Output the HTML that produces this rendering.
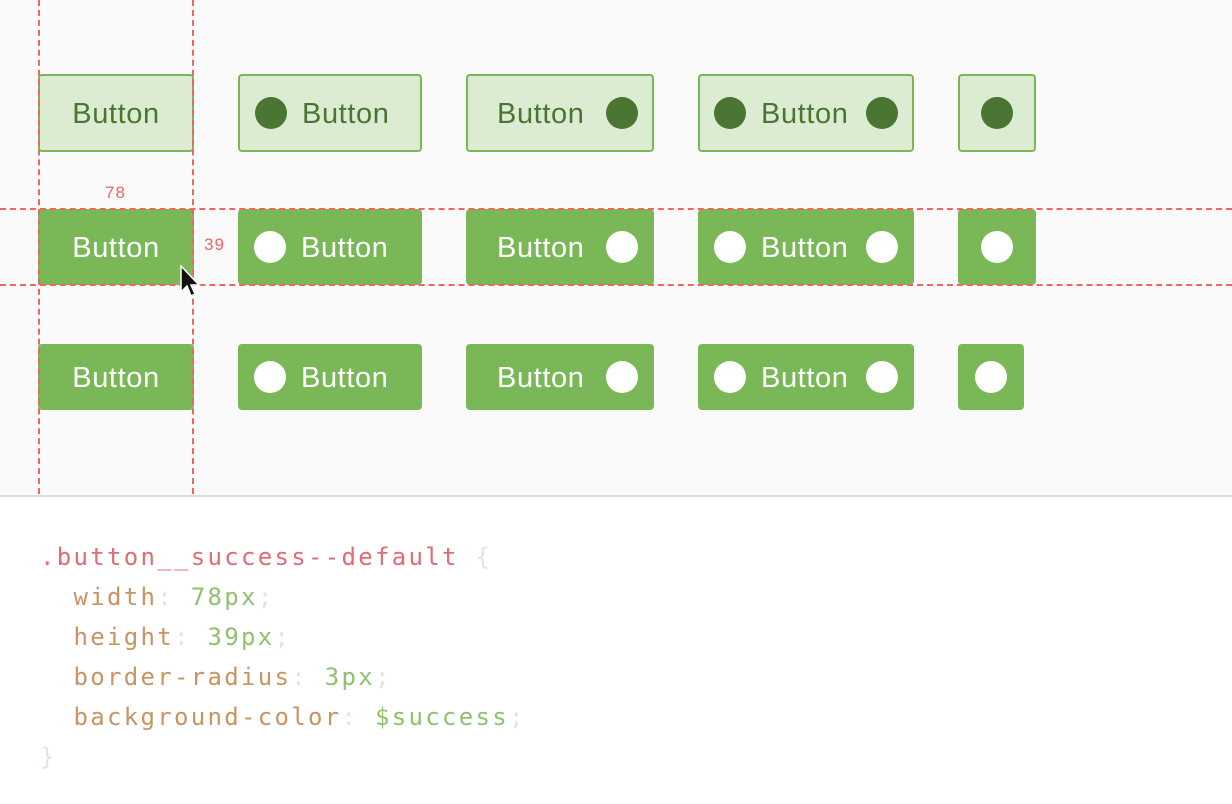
<!DOCTYPE html>
<html><head><meta charset="utf-8"><style>
body{margin:0;width:1232px;height:804px;background:#fff;position:relative;overflow:hidden;font-family:"Liberation Sans",sans-serif}
.top{position:absolute;left:0;top:0;width:1232px;height:495px;background:#fafafa;border-bottom:2px solid #dcdcdc}
.b{position:absolute;box-sizing:border-box;border-radius:4px;background:#7ab857;color:#fff;font-size:29px;letter-spacing:0.6px;display:flex;align-items:center;justify-content:center}
.b span:not(.c){margin-top:3px}
.l{background:#dcecd2;border:2px solid #7ab857;color:#4a7533}
.c{width:32px;height:32px;border-radius:50%;background:#fff;display:inline-block;flex:none}
.l .c{background:#4a7533}
.v{position:absolute;top:0;height:494px;border-left:2px dashed #f06464}
.h{position:absolute;left:0;width:1232px;border-top:2px dashed #f06464}
.code{position:absolute;left:40px;top:537px;font-family:"DejaVu Sans Mono","Liberation Mono",monospace;font-size:24px;line-height:40px;letter-spacing:2.3px;white-space:pre;color:#c89464}
.s{color:#e06c75}.p{color:#e0e3e8}.g{color:#90c070}
</style></head><body>
<div class="top"></div>
<!-- row1 -->
<div class="b l" style="left:38px;top:74px;width:156px;height:78px"><span>Button</span></div>
<div class="b l" style="left:238px;top:74px;width:184px;height:78px;justify-content:flex-start;padding-left:15px"><span class="c"></span><span style="margin-left:15px">Button</span></div>
<div class="b l" style="left:466px;top:74px;width:188px;height:78px;justify-content:flex-start;padding-left:29px"><span>Button</span><span class="c" style="margin-left:22px"></span></div>
<div class="b l" style="left:698px;top:74px;width:216px;height:78px;justify-content:flex-start;padding-left:14px"><span class="c"></span><span style="margin-left:15px">Button</span><span class="c" style="margin-left:18px"></span></div>
<div class="b l" style="left:958px;top:74px;width:78px;height:78px"><span class="c"></span></div>
<!-- row2 -->
<div class="b" style="left:38px;top:209px;width:156px;height:76px"><span>Button</span></div>
<div class="b" style="left:238px;top:209px;width:184px;height:76px;justify-content:flex-start;padding-left:16px"><span class="c"></span><span style="margin-left:15px">Button</span></div>
<div class="b" style="left:466px;top:209px;width:188px;height:76px;justify-content:flex-start;padding-left:31px"><span>Button</span><span class="c" style="margin-left:22px"></span></div>
<div class="b" style="left:698px;top:209px;width:216px;height:76px;justify-content:flex-start;padding-left:16px"><span class="c"></span><span style="margin-left:15px">Button</span><span class="c" style="margin-left:18px"></span></div>
<div class="b" style="left:958px;top:209px;width:78px;height:76px"><span class="c"></span></div>
<!-- row3 -->
<div class="b" style="left:38px;top:344px;width:156px;height:66px"><span>Button</span></div>
<div class="b" style="left:238px;top:344px;width:184px;height:66px;justify-content:flex-start;padding-left:16px"><span class="c"></span><span style="margin-left:15px">Button</span></div>
<div class="b" style="left:466px;top:344px;width:188px;height:66px;justify-content:flex-start;padding-left:31px"><span>Button</span><span class="c" style="margin-left:22px"></span></div>
<div class="b" style="left:698px;top:344px;width:216px;height:66px;justify-content:flex-start;padding-left:16px"><span class="c"></span><span style="margin-left:15px">Button</span><span class="c" style="margin-left:18px"></span></div>
<div class="b" style="left:958px;top:344px;width:66px;height:66px"><span class="c"></span></div>
<!-- guides -->
<div class="v" style="left:38px"></div><div class="v" style="left:192px"></div>
<div class="h" style="top:208px"></div><div class="h" style="top:284px"></div>
<div style="position:absolute;left:105px;top:183px;font-size:17px;color:#f06464;letter-spacing:1px">78</div>
<div style="position:absolute;left:204px;top:235px;font-size:17px;color:#f06464;letter-spacing:1px">39</div>
<svg style="position:absolute;left:179px;top:265px" width="22" height="38" viewBox="0 0 22 38"><path d="M2 1 L2 27 L8 21 L12 31 L16 29 L12 20 L20 20 Z" fill="#111" stroke="#fff" stroke-width="1.5"/></svg>
<div class="code"><span class="s">.button__success--default</span> <span class="p">{</span>
  width<span class="p">:</span> <span class="g">78px</span><span class="p">;</span>
  height<span class="p">:</span> <span class="g">39px</span><span class="p">;</span>
  border-radius<span class="p">:</span> <span class="g">3px</span><span class="p">;</span>
  background-color<span class="p">:</span> <span class="g">$success</span><span class="p">;</span>
<span class="p">}</span></div>
</body></html>
